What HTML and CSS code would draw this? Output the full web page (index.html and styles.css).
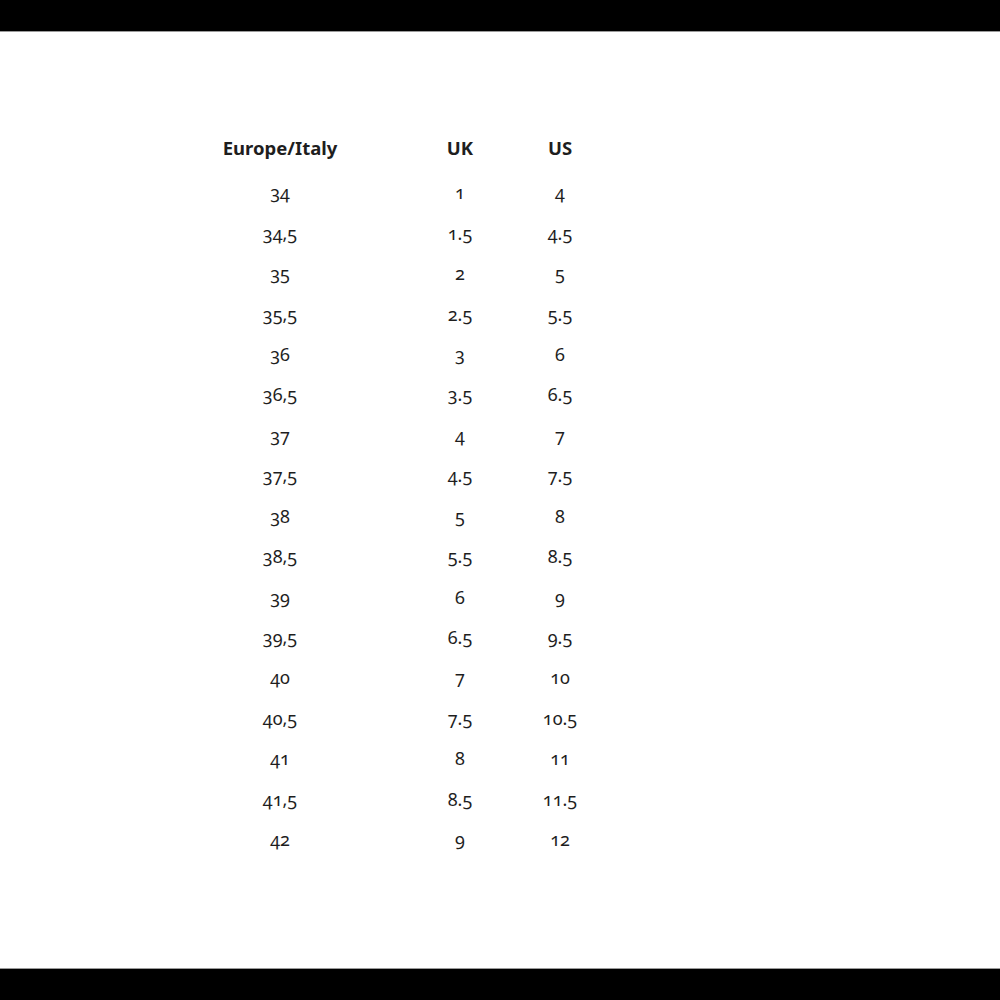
FILE: index.html
```html
<!DOCTYPE html>
<html>
<head>
<meta charset="utf-8">
<link rel="stylesheet" href="styles.css">
</head>
<body>
<div class="bar"></div>
<main class="page">
  <div class="sizes">
    <div class="row head"><span>Europe/Italy</span><span>UK</span><span>US</span></div>
    <div class="row"><span>34</span><span>1</span><span>4</span></div>
    <div class="row"><span>34,5</span><span>1.5</span><span>4.5</span></div>
    <div class="row"><span>35</span><span>2</span><span>5</span></div>
    <div class="row"><span>35,5</span><span>2.5</span><span>5.5</span></div>
    <div class="row"><span>36</span><span>3</span><span>6</span></div>
    <div class="row"><span>36,5</span><span>3.5</span><span>6.5</span></div>
    <div class="row"><span>37</span><span>4</span><span>7</span></div>
    <div class="row"><span>37,5</span><span>4.5</span><span>7.5</span></div>
    <div class="row"><span>38</span><span>5</span><span>8</span></div>
    <div class="row"><span>38,5</span><span>5.5</span><span>8.5</span></div>
    <div class="row"><span>39</span><span>6</span><span>9</span></div>
    <div class="row"><span>39,5</span><span>6.5</span><span>9.5</span></div>
    <div class="row"><span>40</span><span>7</span><span>10</span></div>
    <div class="row"><span>40,5</span><span>7.5</span><span>10.5</span></div>
    <div class="row"><span>41</span><span>8</span><span>11</span></div>
    <div class="row"><span>41,5</span><span>8.5</span><span>11.5</span></div>
    <div class="row"><span>42</span><span>9</span><span>12</span></div>
  </div>
</main>
<div class="bar bottom"></div>
</body>
</html>
```
FILE: styles.css
```css
html, body {
  margin: 0;
  padding: 0;
  background: #000;
}
body {
  width: 1000px;
  height: 1000px;
  display: flex;
  flex-direction: column;
  font-family: "Noto Sans", "Open Sans", sans-serif;
  color: #1e1e1e;
}
.bar {
  height: 31px;
  background: #000;
  border-bottom: 1px solid #9a9a9a;
}
.bar.bottom {
  height: 31px;
  border-bottom: none;
  border-top: 1px solid #9a9a9a;
}
.page {
  flex: 1;
  background: #fff;
  padding-top: 96px;
  padding-left: 200px;
}
.sizes {
  display: flex;
  flex-direction: column;
  font-size: 18px;
  font-variant-numeric: oldstyle-nums;
}
.row {
  display: grid;
  grid-template-columns: 160px 200px 0;
  height: 40.45px;
  align-items: center;
}
.row > span {
  display: flex;
  justify-content: center;
  white-space: nowrap;
}
.row.head {
  height: 38px;
  font-weight: 700;
  font-size: 18.5px;
  margin-bottom: 6px;
}
```
